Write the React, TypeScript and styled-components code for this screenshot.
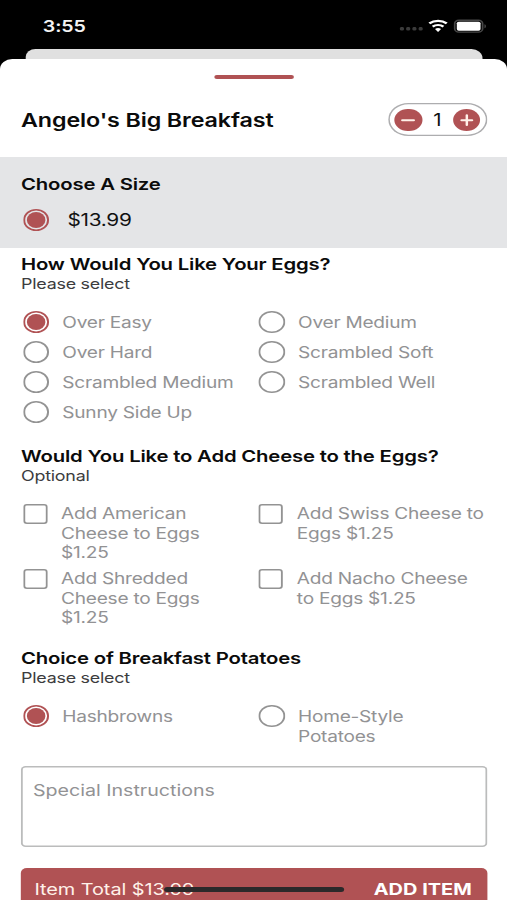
import React, { useState } from 'react';
import styled, { createGlobalStyle } from 'styled-components';

const RED = '#b05254';
const GREY = '#929294';

const GlobalStyle = createGlobalStyle`
  * { box-sizing: border-box; }
  html, body { margin: 0; padding: 0; overflow: hidden; background: #000; }
  body { font-family: Inter, "Liberation Sans", sans-serif; }
`;

/* A 414pt wide phone screen, widened to fill the 507px viewport. */
const Screen = styled.div`
  width: 414px;
  height: 900px;
  display: flex;
  flex-direction: column;
  overflow: hidden;
  position: relative;
  background: #000;
  transform: scaleX(1.22464);
  transform-origin: 0 0;
`;

const StatusBar = styled.header`
  height: 49.4px;
  flex: none;
  display: flex;
  align-items: center;
  justify-content: space-between;
  padding: 2px 17px 0 35px;
  color: #f4f4f4;
`;

const Clock = styled.span`
  font-size: 16px;
  line-height: 20px;
  font-weight: 600;
  letter-spacing: -0.1px;
`;

const StatusIcons = styled.svg`
  display: block;
  width: 72px;
  height: 16px;
  margin-top: -2px;
`;

const BackSheet = styled.div`
  height: 9.6px;
  flex: none;
  margin: 0 20.2px 0 21px;
  border-radius: 8px 9px 0 0;
  background: #e0e0e0;
`;

const Sheet = styled.main`
  flex: 1;
  min-height: 0;
  display: flex;
  flex-direction: column;
  overflow: hidden;
  background: #fff;
  border-radius: 10px 10px 0 0;
`;

const Handle = styled.div`
  width: 65.5px;
  height: 4px;
  flex: none;
  margin: 16px 174px 0 174.7px;
  border-radius: 2px;
  background: ${RED};
`;

const TitleRow = styled.div`
  height: 78.5px;
  flex: none;
  display: flex;
  align-items: center;
  justify-content: space-between;
  padding: 3px 16px 0 17.2px;
`;

const Title = styled.h1`
  margin: 0;
  padding-top: 3px;
  font-size: 19px;
  line-height: 24px;
  font-weight: 600;
  color: #0b0b0b;
  letter-spacing: -0.09px;
`;

const Stepper = styled.div`
  width: 81.5px;
  height: 33.5px;
  display: flex;
  align-items: center;
  justify-content: space-between;
  padding: 0 5.7px;
  box-shadow: inset 0 0 0 1.3px #adadaf;
  border-radius: 17px;
  font-size: 16.6px;
  line-height: 22px;
  color: #111;
`;

const StepButton = styled.button`
  width: 22.4px;
  height: 22.4px;
  padding: 0;
  border: 0;
  border-radius: 50%;
  background: ${RED};
  svg { display: block; width: 22.4px; height: 22.4px; }
`;

const SizeBand = styled.section`
  height: 91px;
  flex: none;
  padding: 16.5px 17.2px 0;
  background: #e4e5e7;
`;

const Heading = styled.h2`
  margin: 0;
  font-size: 16.6px;
  line-height: 20px;
  font-weight: 600;
  letter-spacing: -0.16px;
  color: #0b0b0b;
  white-space: nowrap;
`;

const SizeOption = styled.label`
  display: flex;
  align-items: center;
  gap: 14.6px;
  margin: 15px 0 0 1.5px;
  font-size: 17px;
  line-height: 22px;
  letter-spacing: -0.25px;
  color: #111;
`;

const Group = styled.section<{ $height: number; $top?: number }>`
  height: ${(p) => p.$height}px;
  flex: none;
  padding: ${(p) => p.$top ?? 0}px 0 0 17.2px;
`;

const Hint = styled.p`
  margin: 0;
  font-size: 14.6px;
  line-height: 20px;
  letter-spacing: -0.2px;
  color: #3c3c3e;
`;

const Options = styled.div<{ $rowGap: number }>`
  display: grid;
  grid-template-columns: 192.5px 192.5px;
  row-gap: ${(p) => p.$rowGap}px;
  margin: 17px 0 0 1.5px;
`;

const Option = styled.label<{ $gap: number; $textWidth: number; $drop: number }>`
  display: flex;
  align-items: flex-start;
  gap: ${(p) => p.$gap}px;
  font-size: 15.6px;
  line-height: 19.5px;
  letter-spacing: -0.2px;
  color: ${GREY};
  > span:last-child {
    width: ${(p) => p.$textWidth}px;
    padding-top: ${(p) => p.$drop}px;
    margin-bottom: ${(p) => 1 - p.$drop}px;
  }
`;

const Radio = styled.span<{ $on?: boolean }>`
  width: 21.8px;
  height: 22px;
  flex: none;
  display: block;
  padding: 3.2px;
  box-shadow: inset 0 0 0 1.6px ${(p) => (p.$on ? RED : '#939393')};
  border-radius: 50%;
  &::after {
    content: '';
    display: block;
    width: 100%;
    height: 100%;
    border-radius: 50%;
    background: ${(p) => (p.$on ? RED : 'transparent')};
  }
`;

const Checkbox = styled.span`
  width: 20px;
  height: 20px;
  flex: none;
  margin-top: 0.9px;
  box-shadow: inset 0 0 0 1.6px #939393;
  border-radius: 3px;
`;

const Instructions = styled.textarea`
  display: block;
  flex: none;
  width: 381.5px;
  height: 81px;
  margin: 0 0 0 16.6px;
  padding: 13.5px 10.4px;
  border: 0;
  box-shadow: inset 0 0 0 1.6px #bbbcbc;
  border-radius: 4px;
  outline: 0;
  resize: none;
  font: 16px/20px Inter, "Liberation Sans", sans-serif;
  background: #fff;
  &::placeholder { color: ${GREY}; opacity: 1; }
`;

const AddBar = styled.button`
  display: flex;
  flex: none;
  align-items: center;
  justify-content: space-between;
  width: 381.5px;
  height: 44px;
  margin: 20.5px 0 0 16.6px;
  padding: 0 12.9px 1px 11.6px;
  border: 0;
  border-radius: 5px;
  background: ${RED};
  color: #fff1e9;
  font: 16.3px/20px Inter, "Liberation Sans", sans-serif;
  letter-spacing: -0.07px;
  b { color: #fff; font-weight: 700; letter-spacing: 0; }
`;

const HomeIndicator = styled.div`
  position: absolute;
  left: 134px;
  bottom: 8px;
  width: 147px;
  height: 5px;
  border-radius: 3px;
  background: #2b292a;
`;

const eggs = ['Over Easy', 'Over Medium', 'Over Hard', 'Scrambled Soft', 'Scrambled Medium', 'Scrambled Well', 'Sunny Side Up'];
const cheeses = [
  'Add American Cheese to Eggs $1.25',
  'Add Swiss Cheese to Eggs $1.25',
  'Add Shredded Cheese to Eggs $1.25',
  'Add Nacho Cheese to Eggs $1.25',
];
const potatoes = ['Hashbrowns', 'Home-Style Potatoes'];

function RadioGroup({ items, textWidth }: { items: string[]; textWidth: number }) {
  const [chosen, setChosen] = useState(items[0]);
  return (
    <Options $rowGap={8}>
      {items.map((item) => (
        <Option key={item} $gap={10.4} $textWidth={textWidth} $drop={2.3} onClick={() => setChosen(item)}>
          <Radio $on={item === chosen} />
          <span>{item}</span>
        </Option>
      ))}
    </Options>
  );
}

export default function App() {
  return (
    <>
      <GlobalStyle />
      <Screen>
        <StatusBar>
          <Clock>3:55</Clock>
          <StatusIcons viewBox="0 0 72 16">
            <g fill="#3b3b3b">
              <rect x="1.6" y="10" width="3.2" height="3.4" rx="1.2" />
              <rect x="6.7" y="10" width="3.2" height="3.4" rx="1.2" />
              <rect x="11.8" y="10" width="3.2" height="3.4" rx="1.2" />
              <rect x="16.9" y="10" width="3.2" height="3.4" rx="1.2" />
            </g>
            <g fill="none" stroke="#fff" strokeWidth="2.3">
              <path d="M25.6 6.4a11 11 0 0 1 14.2 0" />
              <path d="M28.3 9.6a7 7 0 0 1 8.8 0" />
            </g>
            <path d="M30.2 12a4 4 0 0 1 5 0L32.7 14.9Z" fill="#fff" />
            <rect x="46.3" y="3.3" width="22.8" height="11.8" rx="3.4" fill="none" stroke="#484848" strokeWidth="1.4" />
            <rect x="48" y="4.7" width="19.4" height="9" rx="1.6" fill="#fff" />
            <path d="M70.6 7.2v4c1.6-.5 1.6-3.5 0-4Z" fill="#484848" />
          </StatusIcons>
        </StatusBar>
        <BackSheet />
        <Sheet>
          <Handle />
          <TitleRow>
            <Title>Angelo's Big Breakfast</Title>
            <Stepper>
              <StepButton aria-label="Remove one">
                <svg viewBox="0 0 22 22"><path d="M6.4 11h9.2" stroke="#fff1e9" strokeWidth="2" strokeLinecap="round" /></svg>
              </StepButton>
              <span>1</span>
              <StepButton aria-label="Add one">
                <svg viewBox="0 0 22 22"><path d="M6.8 11h8.4M11 6.2v9.6" stroke="#fff1e9" strokeWidth="2" strokeLinecap="round" /></svg>
              </StepButton>
            </Stepper>
          </TitleRow>
          <SizeBand>
            <Heading>Choose A Size</Heading>
            <SizeOption>
              <Radio $on />
              <span>$13.99</span>
            </SizeOption>
          </SizeBand>
          <Group $height={197.5} $top={5.5}>
            <Heading>How Would You Like Your Eggs?</Heading>
            <Hint>Please select</Hint>
            <RadioGroup items={eggs} textWidth={150} />
          </Group>
          <Group $height={202}>
            <Heading>Would You Like to Add Cheese to the Eggs?</Heading>
            <Hint>Optional</Hint>
            <Options $rowGap={5.5}>
              {cheeses.map((item) => (
                <Option key={item} $gap={11.2} $textWidth={155} $drop={1.5}>
                  <Checkbox />
                  <span>{item}</span>
                </Option>
              ))}
            </Options>
          </Group>
          <Group $height={118.5}>
            <Heading>Choice of Breakfast Potatoes</Heading>
            <Hint>Please select</Hint>
            <RadioGroup items={potatoes} textWidth={120} />
          </Group>
          <Instructions placeholder="Special Instructions" />
          <AddBar>
            <span>Item Total $13.99</span>
            <b>ADD ITEM</b>
          </AddBar>
        </Sheet>
        <HomeIndicator />
      </Screen>
    </>
  );
}
